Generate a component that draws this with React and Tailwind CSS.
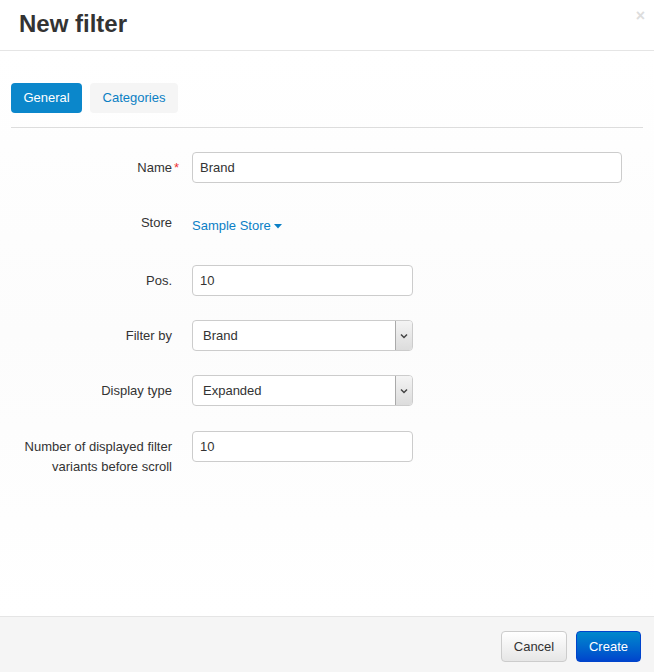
export default function App() {
  const font = { fontFamily: '"Liberation Sans", Arial, sans-serif' };
  const Select = ({ value }) => (
    <div className="flex h-[31px] w-[221px] items-stretch overflow-hidden rounded-[4px] border border-[#cccccc] bg-white">
      <div className="flex flex-1 items-center pl-[10px] text-[13px] text-[#333]">{value}</div>
      <div className="flex w-[17px] items-center justify-center border-l border-[#aaa] bg-gradient-to-b from-[#f4f4f4] to-[#dcdcdc]">
        <svg width="8" height="6" viewBox="0 0 8 6"><path d="M1 1.5 L4 4.5 L7 1.5" stroke="#444" strokeWidth="1.5" fill="none" /></svg>
      </div>
    </div>
  );
  const Label = ({ children, className = "" }) => (
    <div className={"relative w-[161px] shrink-0 text-right text-[13px] leading-[20px] text-[#333] " + className}>{children}</div>
  );
  return (
    <div style={font} className="flex h-[672px] w-[654px] flex-col bg-white text-[#333]">
      <div className="relative flex h-[51px] shrink-0 items-center border-b border-[#e5e5e5] px-[19px]">
        <h1 className="text-[24px] font-bold leading-none text-[#333] -mt-[2px]">New filter</h1>
        <span className="absolute right-[9px] top-[4px] text-[16px] font-bold text-[#ddd]">×</span>
      </div>
      <div className="flex-1 bg-gradient-to-b from-white via-[#fcfcfc] to-white px-[11px]">
        <div className="mt-[32px] flex gap-[8px] border-b border-[#dddddd] pb-[14px]">
          <div className="flex h-[30px] w-[71px] items-center justify-center rounded-[4px] bg-[#0b87cb] text-[13px] text-white">General</div>
          <div className="flex h-[30px] w-[88px] items-center justify-center rounded-[4px] bg-[#f5f5f5] text-[13px] text-[#0b7fc4]">Categories</div>
        </div>
        <div className="mt-[24px] flex flex-col">
          <div className="flex items-center gap-[20px]">
            <Label>Name<span className="absolute left-full top-0 ml-[2px] text-[#e33]">*</span></Label>
            <div className="flex h-[31px] w-[430px] items-center rounded-[4px] border border-[#ccc] bg-white pl-[7px] text-[13px]">Brand</div>
          </div>
          <div className="mt-[29px] flex items-start gap-[20px]">
            <Label className="mt-[1px]">Store</Label>
            <div className="mt-[4px] flex items-center text-[13px] leading-[20px] text-[#0b80c6]">Sample Store
              <svg className="ml-[3px]" width="8" height="5" viewBox="0 0 8 5"><path d="M0 0 L8 0 L4 4.5 Z" fill="#0b80c6" /></svg>
            </div>
          </div>
          <div className="mt-[29px] flex items-center gap-[20px]">
            <Label>Pos.</Label>
            <div className="flex h-[31px] w-[221px] items-center rounded-[4px] border border-[#ccc] bg-white pl-[7px] text-[13px]">10</div>
          </div>
          <div className="mt-[24px] flex items-center gap-[20px]">
            <Label>Filter by</Label>
            <Select value="Brand" />
          </div>
          <div className="mt-[24px] flex items-center gap-[20px]">
            <Label>Display type</Label>
            <Select value="Expanded" />
          </div>
          <div className="mt-[25px] flex items-start gap-[20px]">
            <Label className="mt-[6px]">Number of displayed filter variants before scroll</Label>
            <div className="flex h-[31px] w-[221px] items-center rounded-[4px] border border-[#ccc] bg-white pl-[7px] text-[13px]">10</div>
          </div>
        </div>
      </div>
      <div className="flex h-[56px] shrink-0 items-center justify-end gap-[9px] border-t border-[#e5e5e5] bg-[#f5f5f5] pr-[13px] pt-[4px]">
        <div className="flex h-[31px] w-[66px] items-center justify-center rounded-[4px] border border-[#ccc] bg-gradient-to-b from-white to-[#e6e6e6] text-[13px] text-[#333]">Cancel</div>
        <div className="flex h-[31px] w-[65px] items-center justify-center rounded-[4px] border border-[#0044cc] bg-gradient-to-b from-[#0088cc] to-[#0044cc] text-[13px] text-white">Create</div>
      </div>
    </div>
  );
}
